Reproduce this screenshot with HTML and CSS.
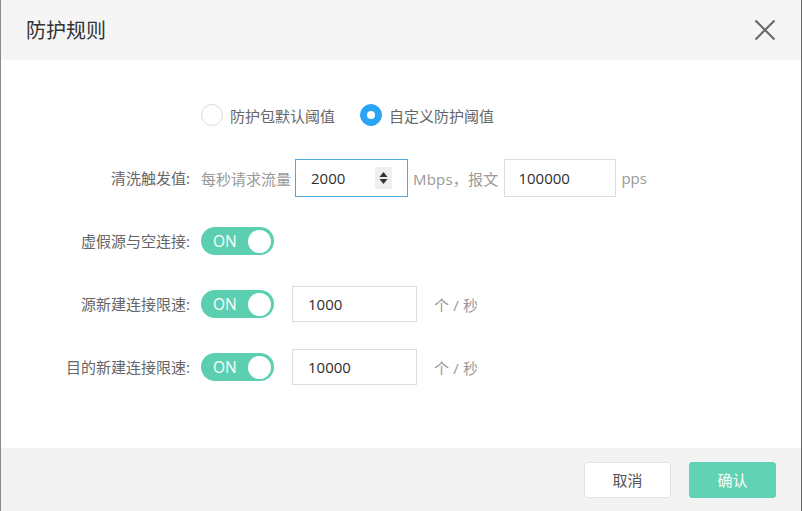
FILE: index.html
```html
<!DOCTYPE html>
<html lang="zh-CN">
<head>
<meta charset="utf-8">
<title>防护规则</title>
<link rel="stylesheet" href="styles.css">
</head>
<body>
<div class="dialog">
  <div class="header">
    <div class="title">防护规则</div>
    <svg class="close" width="22" height="22" viewBox="0 0 22 22"><path d="M1.5 1.5L20.5 20.5M20.5 1.5L1.5 20.5" stroke="#6b6b6b" stroke-width="2.2" fill="none"/></svg>
  </div>
  <div class="body">
    <div class="row">
      <div class="label"></div>
      <div class="controls">
        <span class="radio"></span><span class="radio-text">防护包默认阈值</span>
        <span class="radio checked"></span><span class="radio-text">自定义防护阈值</span>
      </div>
    </div>
    <div class="row">
      <div class="label">清洗触发值:</div>
      <div class="controls">
        <span class="hint">每秒请求流量</span>
        <div class="input active w113">
          <span class="val">2000</span>
          <svg class="spin" width="17" height="22" viewBox="0 0 17 22"><rect x="0" y="0" width="17" height="22" fill="#efefef"/><path d="M4.5 10L8.5 5L12.5 10Z" fill="#333"/><path d="M4.5 12L8.5 17L12.5 12Z" fill="#333"/></svg>
        </div>
        <span class="hint g5">Mbps，报文</span>
        <div class="input w112 g6"><span class="val">100000</span></div>
        <span class="hint g5b">pps</span>
      </div>
    </div>
    <div class="row">
      <div class="label">虚假源与空连接:</div>
      <div class="controls">
        <div class="switch"><span class="on">ON</span><span class="knob"></span></div>
      </div>
    </div>
    <div class="row">
      <div class="label">源新建连接限速:</div>
      <div class="controls">
        <div class="switch"><span class="on">ON</span><span class="knob"></span></div>
        <div class="input small w125 g18"><span class="val">1000</span></div>
        <span class="hint g17">个 / 秒</span>
      </div>
    </div>
    <div class="row">
      <div class="label">目的新建连接限速:</div>
      <div class="controls">
        <div class="switch"><span class="on">ON</span><span class="knob"></span></div>
        <div class="input small w125 g18"><span class="val">10000</span></div>
        <span class="hint g17">个 / 秒</span>
      </div>
    </div>
  </div>
  <div class="footer">
    <button class="btn cancel">取消</button>
    <button class="btn ok">确认</button>
  </div>
</div>
</body>
</html>
```
FILE: styles.css
```css
html, body {
  margin: 0;
  padding: 0;
  background: #fff;
}
body {
  font-family: "Open Sans", "Noto Sans CJK SC", sans-serif;
  font-size: 15px;
  color: #666;
}
.dialog {
  width: 802px;
  height: 511px;
  box-sizing: border-box;
  border-left: 1px solid #8a8a8a;
  border-right: 1px solid #6a6a6a;
  display: flex;
  flex-direction: column;
}
.header {
  height: 60px;
  flex: none;
  background: #f5f5f5;
  display: flex;
  align-items: center;
  justify-content: space-between;
  padding: 0 25px 0 25px;
}
.title {
  font-family: "Noto Sans CJK SC", sans-serif;
  font-size: 20px;
  color: #333;
  line-height: 24px;
}
.close {
  display: block;
}
.body {
  flex: 1;
  padding-top: 36px;
  display: flex;
  flex-direction: column;
  gap: 25px;
}
.row {
  height: 38px;
  display: flex;
  align-items: center;
}
.label {
  width: 189px;
  margin-right: 11px;
  text-align: right;
  color: #666;
  line-height: 20px;
  flex: none;
}
.controls {
  display: flex;
  align-items: center;
  height: 38px;
}
.radio {
  width: 20px;
  height: 20px;
  border: 1px solid #dcdcdc;
  border-radius: 50%;
  box-sizing: content-box;
  flex: none;
  position: relative;
}
.radio.checked {
  background: #2aa4f4;
  border-color: #2aa4f4;
}
.radio.checked::after {
  content: "";
  position: absolute;
  left: 6px;
  top: 6px;
  width: 8px;
  height: 8px;
  border-radius: 50%;
  background: #fff;
}
.radio-text {
  margin-left: 7px;
  margin-right: 25px;
  color: #666;
}
.hint {
  color: #999;
  margin-right: 4px;
}
.g5 { margin-left: 5px; margin-right: 0; letter-spacing: 0.2px; }
.g5b { margin-left: 5px; }
.g6 { margin-left: 6px; }
.g17 { margin-left: 17px; letter-spacing: 0.2px; }
.g18 { margin-left: 18px; }
.input {
  box-sizing: border-box;
  height: 38px;
  border: 1px solid #ddd;
  display: flex;
  align-items: center;
  justify-content: space-between;
  padding: 0 15px 0 15px;
  color: #333;
  flex: none;
}
.input.small {
  height: 36px;
}
.input.active {
  border-color: #4aa9dd;
  padding-right: 15px;
}
.w113 { width: 113px; }
.w112 { width: 112px; padding-left: 13px; }
.w125 { width: 125px; }
.val {
  font-size: 15px;
  color: #2e2e2e;
}
.spin {
  display: block;
}
.switch {
  width: 73px;
  height: 28px;
  border-radius: 14px;
  background: #5ccfb1;
  display: flex;
  align-items: center;
  justify-content: space-between;
  padding: 0 3px 0 12px;
  box-sizing: border-box;
  flex: none;
}
.on {
  color: #fff;
  font-size: 15.5px;
  line-height: 20px;
}
.knob {
  width: 23px;
  height: 23px;
  border-radius: 50%;
  background: #fff;
}
.footer {
  height: 63px;
  flex: none;
  background: #f3f3f3;
  display: flex;
  align-items: center;
  justify-content: flex-end;
  padding-right: 25px;
  gap: 18px;
}
.btn {
  width: 87px;
  height: 36px;
  box-sizing: border-box;
  font-family: "Noto Sans CJK SC", sans-serif;
  font-size: 15px;
  border-radius: 3px;
  padding: 0;
}
.cancel {
  background: #fff;
  border: 1px solid #e3e3e3;
  color: #555;
}
.ok {
  background: #62d2b4;
  border: 1px solid #62d2b4;
  color: #fff;
}
```
